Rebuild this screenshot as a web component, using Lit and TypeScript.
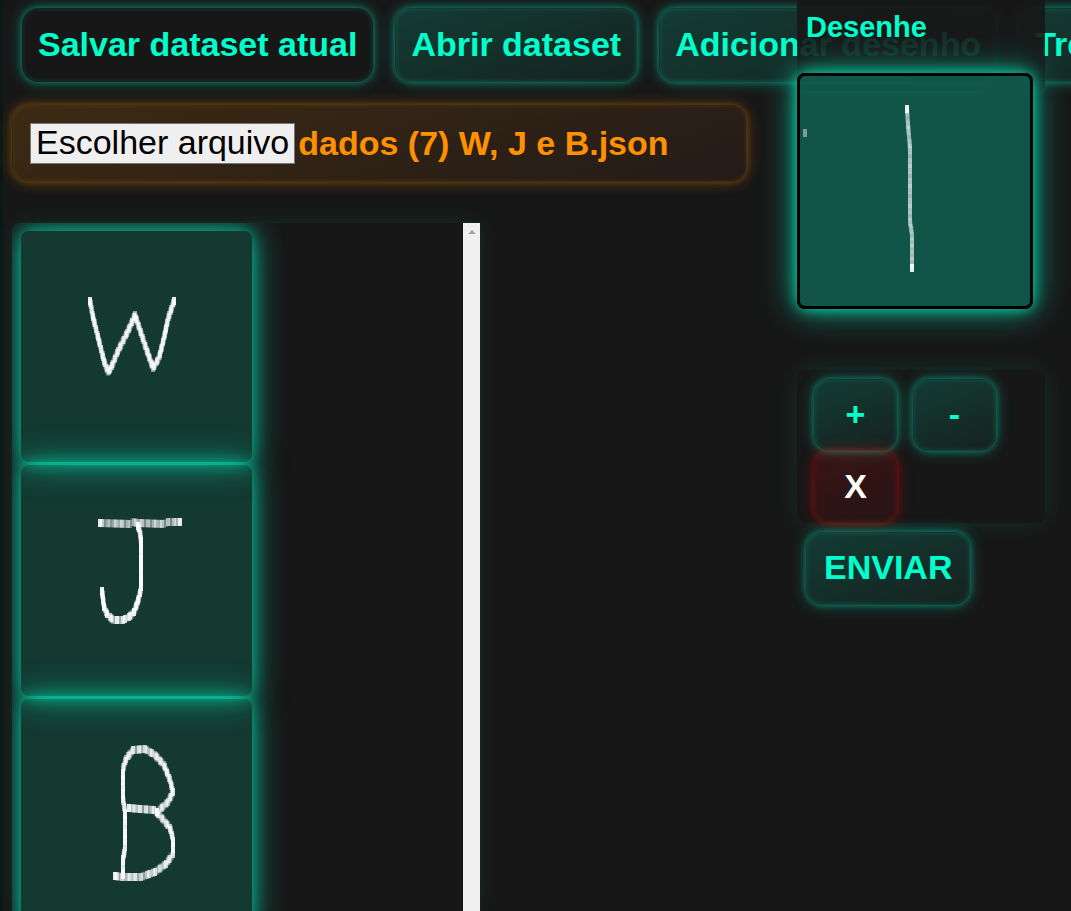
import { LitElement, html, svg, css } from "lit";
import { customElement, property } from "lit/decorators.js";

type Point = [number, number];
interface Stroke {
  points: Point[];
  ink: number;
}

const STEP = 2;

/** Places pen marks at a regular distance along a polyline. */
function marksAlong(points: Point[]): Point[] {
  const out: Point[] = [points[0]];
  for (let i = 1; i < points.length; i++) {
    const [x0, y0] = points[i - 1];
    const [x1, y1] = points[i];
    const n = Math.max(1, Math.round(Math.hypot(x1 - x0, y1 - y0) / STEP));
    for (let k = 1; k <= n; k++) {
      out.push([x0 + ((x1 - x0) * k) / n, y0 + ((y1 - y0) * k) / n]);
    }
  }
  return out;
}

const LETTER_W: Stroke[] = [
  {
    ink: 0.66,
    points: [[69, 70], [72, 86], [75, 98], [79, 114], [83, 130], [87, 141], [90, 137], [97, 120], [107, 100], [114, 84], [119, 99], [125, 117], [132, 137], [138, 127], [143, 107], [147, 88], [153, 70]],
  },
];

const LETTER_J: Stroke[] = [
  { ink: 0.52, points: [[79, 58], [109, 59], [111, 57], [117, 58], [143, 59], [147, 57], [159, 57]] },
  {
    ink: 0.75,
    points: [[117, 61], [119, 67], [120, 76], [120, 124], [117, 136], [113, 147], [108, 152], [102, 155], [92, 155], [86, 149], [83, 142], [81, 126]],
  },
];

const LETTER_B: Stroke[] = [
  {
    ink: 0.65,
    points: [[94, 177], [101, 178], [120, 178], [134, 173], [145, 165], [152, 155], [152, 140], [149, 129], [140, 118], [133, 111], [119, 110], [108, 109]],
  },
  {
    ink: 0.65,
    points: [[102, 176], [102, 160], [104, 150], [104, 112], [102, 100], [102, 70], [105, 60], [112, 51], [124, 50], [134, 56], [143, 66], [149, 81], [152, 93], [147, 103], [136, 113]],
  },
];

const CURRENT: Stroke[] = [
  { ink: 0.3, points: [[107, 33], [108, 49], [110, 72], [110, 146], [112, 158], [112, 192]] },
  { ink: 0.1, points: [[5, 57], [5, 57]] },
];

@customElement("pen-drawing")
export class PenDrawing extends LitElement {
  @property({ attribute: false }) strokes: Stroke[] = [];
  @property({ type: Number }) size = 231;
  @property() label = "";

  static styles = css`
    :host {
      display: block;
    }
    .sheet {
      display: block;
      width: 100%;
      height: 100%;
    }
    .mark {
      fill: #ffffff;
    }
  `;

  render() {
    return html`<svg class="sheet" viewBox="0 0 ${this.size} ${this.size}" role="img" aria-label=${this.label}>
      ${this.strokes.map((s) => {
        const marks = marksAlong(s.points);
        const last = marks.length - 1;
        return marks.map(([x, y], i) => {
          const end = i === 0 || i === last;
          const wave = Math.sin(i * 1.7 + Math.floor(i / 5));
          const ink = end ? 0.9 : s.ink * (0.75 + 0.45 * wave);
          return svg`<rect class="mark" x=${x - 2} y=${y - 4} width="4" height="8"
            fill-opacity=${s.ink === 0.1 ? 0.25 : ink.toFixed(2)}></rect>`;
        });
      })}
    </svg>`;
  }
}

@customElement("app-root")
export class AppRoot extends LitElement {
  static styles = css`
    :host {
      display: block;
      position: relative;
      height: 100vh;
      overflow: hidden;
      background: #0a1715;
      font-family: "Liberation Sans", Arial, sans-serif;
      font-size: 34px;
      color: #00ffcc;
    }
    * {
      box-sizing: border-box;
    }
    .page {
      display: flex;
      flex-direction: column;
      height: 100%;
      margin-left: 3px;
      padding: 8px 0 0 9px;
      border-radius: 8px 0 0 0;
      background: #171717;
    }
    .toolbar {
      display: flex;
      gap: 22px;
      padding-left: 10px;
    }
    .btn {
      flex: none;
      height: 74px;
      padding: 0 15px 2px;
      border: 1px solid rgba(0, 255, 204, 0.06);
      border-radius: 16px;
      background: linear-gradient(160deg, rgba(0, 255, 204, 0.16), rgba(0, 255, 204, 0.05));
      box-shadow: 0 0 6px rgba(0, 255, 204, 0.36), 0 0 16px rgba(0, 255, 204, 0.32),
        inset 0 0 4px rgba(0, 255, 204, 0.16);
      color: #00ffcc;
      font: bold 34px "Liberation Sans", Arial, sans-serif;
      white-space: nowrap;
      cursor: pointer;
    }
    .btn.active {
      background: #171717;
    }
    .btn.key {
      width: 83px;
      height: 72px;
    }
    .btn.danger {
      border-color: rgba(255, 0, 0, 0.08);
      background: linear-gradient(160deg, rgba(255, 0, 0, 0.15), rgba(255, 0, 0, 0.07));
      box-shadow: 0 0 6px rgba(255, 0, 0, 0.36), 0 0 16px rgba(255, 0, 0, 0.32),
        inset 0 0 4px rgba(255, 0, 0, 0.18);
      color: #ffffff;
    }
    .file {
      display: flex;
      align-items: center;
      gap: 3px;
      width: 100%;
      max-width: 735px;
      height: 77px;
      margin-top: 23px;
      padding: 0 17px;
      border: 1px solid rgba(255, 145, 0, 0.08);
      border-radius: 16px;
      background: linear-gradient(160deg, rgba(255, 145, 0, 0.16), rgba(255, 100, 50, 0.06));
      box-shadow: 0 0 6px rgba(255, 145, 0, 0.28), 0 0 16px rgba(255, 145, 0, 0.28),
        inset 0 0 4px rgba(255, 145, 0, 0.12);
      color: #ff9100;
      font-weight: bold;
      white-space: nowrap;
    }
    .pick {
      height: 41px;
      padding: 0 5px 2px;
      border: 1px solid #767676;
      background: #efefef;
      color: #000000;
      font: 34px/37px "Liberation Sans", Arial, sans-serif;
    }
    .dataset {
      display: flex;
      flex: 1;
      min-height: 0;
      width: 100%;
      max-width: 468px;
      margin-top: 41px;
      border-radius: 8px 0 0 0;
      background: #171717;
      box-shadow: 0 0 5px rgba(0, 255, 204, 0.06), 0 0 28px rgba(0, 255, 204, 0.08);
      overflow: hidden;
    }
    .samples {
      display: flex;
      flex: 1;
      flex-direction: column;
      gap: 3px;
      padding: 8px 9px;
      overflow: hidden;
    }
    .sample {
      flex: none;
      width: 231px;
      height: 231px;
      border-radius: 8px;
      background: rgba(0, 255, 204, 0.15);
      box-shadow: 0 0 16px rgba(0, 255, 204, 0.5), 0 0 34px rgba(0, 255, 204, 0.6);
    }
    .track {
      width: 17px;
      padding-top: 7px;
      background: #f0f0f0;
    }
    .up {
      display: block;
      margin: 0 auto;
    }
    .board {
      position: absolute;
      top: 0;
      right: 26px;
      width: 248px;
      display: flex;
      flex-direction: column;
      align-items: flex-start;
    }
    .title {
      width: 100%;
      height: 91px;
      margin: 0;
      padding: 10px 9px;
      border-radius: 0 0 8px 8px;
      background: rgba(23, 23, 23, 0.9);
      font-size: 29px;
      line-height: 34px;
    }
    .canvas {
      width: 236px;
      height: 236px;
      margin-top: -18px;
      border: 3px solid #000000;
      border-radius: 8px;
      background: rgba(0, 255, 204, 0.27);
      box-shadow: 0 0 14px rgba(0, 255, 204, 0.75), 0 0 34px rgba(0, 255, 204, 0.65);
    }
    .keys {
      display: flex;
      flex-wrap: wrap;
      column-gap: 16px;
      width: 100%;
      margin-top: 61px;
      padding: 9px 17px 0;
      border-radius: 8px;
      box-shadow: 0 0 26px rgba(0, 255, 204, 0.1);
      background: #171717;
    }
    .send {
      height: 73px;
      margin: 9px 0 0 9px;
      padding: 0 17px 2px;
    }
  `;

  private pickFile() {
    this.renderRoot.querySelector<HTMLInputElement>("#arquivo")?.click();
  }

  render() {
    return html`
      <main class="page">
        <nav class="toolbar">
          <button class="btn active">Salvar dataset atual</button>
          <button class="btn">Abrir dataset</button>
          <button class="btn">Adicionar desenho</button>
          <button class="btn">Treinar</button>
        </nav>
        <div class="file">
          <button class="pick" @click=${this.pickFile}>Escolher arquivo</button>
          <label for="arquivo">dados (7) W, J e B.json</label>
          <input id="arquivo" type="file" accept=".json" hidden />
        </div>
        <section class="dataset">
          <div class="samples">
            <pen-drawing class="sample" label="W" .strokes=${LETTER_W}></pen-drawing>
            <pen-drawing class="sample" label="J" .strokes=${LETTER_J}></pen-drawing>
            <pen-drawing class="sample" label="B" .strokes=${LETTER_B}></pen-drawing>
          </div>
          <div class="track">
            <svg class="up" width="8" height="4" viewBox="0 0 8 4" aria-hidden="true">
              <path d="M4 0 L8 4 H0 Z" fill="#a3a3a3"></path>
            </svg>
          </div>
        </section>
      </main>
      <aside class="board">
        <h2 class="title">Desenhe</h2>
        <pen-drawing class="canvas" label="Desenho" size="230" .strokes=${CURRENT}></pen-drawing>
        <div class="keys">
          <button class="btn key">+</button>
          <button class="btn key">-</button>
          <button class="btn key danger">X</button>
        </div>
        <button class="btn send">ENVIAR</button>
      </aside>
    `;
  }
}
